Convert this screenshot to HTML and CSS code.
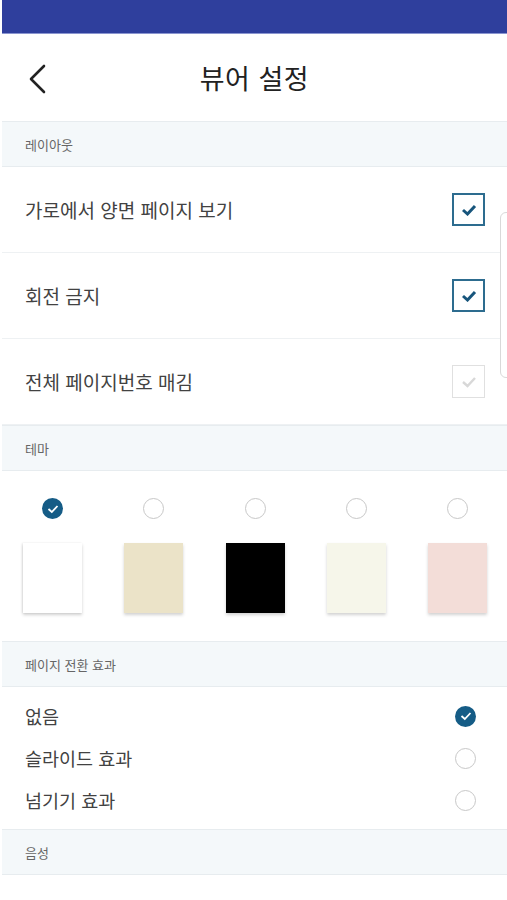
FILE: index.html
```html
<!DOCTYPE html>
<html lang="ko">
<head>
<meta charset="utf-8">
<title>뷰어 설정</title>
<link rel="stylesheet" href="styles.css">
</head>
<body>
<div class="screen">
  <div class="statusbar"></div>
  <header class="appbar">
    <button class="back" aria-label="뒤로">
      <svg width="20" height="30" viewBox="0 0 20 30"><path d="M17 2 L4 15 L17 28" fill="none" stroke="#222" stroke-width="2.6" stroke-linecap="round" stroke-linejoin="round"/></svg>
    </button>
    <h1 class="title">뷰어 설정</h1>
  </header>

  <div class="section">레이아웃</div>
  <div class="row">
    <span class="label">가로에서 양면 페이지 보기</span>
    <span class="checkbox on"><svg width="16" height="12" viewBox="0 0 16 12"><path d="M2 6 L6.5 10 L14 2" fill="none" stroke="#17557c" stroke-width="3"/></svg></span>
  </div>
  <div class="row">
    <span class="label">회전 금지</span>
    <span class="checkbox on"><svg width="16" height="12" viewBox="0 0 16 12"><path d="M2 6 L6.5 10 L14 2" fill="none" stroke="#17557c" stroke-width="3"/></svg></span>
  </div>
  <div class="row">
    <span class="label">전체 페이지번호 매김</span>
    <span class="checkbox off"><svg width="16" height="12" viewBox="0 0 16 12"><path d="M2 6 L6.5 10 L14 2" fill="none" stroke="#d8d8d8" stroke-width="2.4"/></svg></span>
  </div>

  <div class="section">테마</div>
  <div class="themes">
    <div class="theme">
      <span class="radio sel"><svg width="12" height="10" viewBox="0 0 12 10"><path d="M1.5 5 L4.8 8 L10.5 2" fill="none" stroke="#fff" stroke-width="1.8"/></svg></span>
      <span class="swatch white"></span>
    </div>
    <div class="theme"><span class="radio"></span><span class="swatch beige"></span></div>
    <div class="theme"><span class="radio"></span><span class="swatch black"></span></div>
    <div class="theme"><span class="radio"></span><span class="swatch ivory"></span></div>
    <div class="theme"><span class="radio"></span><span class="swatch pink"></span></div>
  </div>

  <div class="section">페이지 전환 효과</div>
  <div class="options">
    <div class="option">
      <span class="label">없음</span>
      <span class="radio sel"><svg width="12" height="10" viewBox="0 0 12 10"><path d="M1.5 5 L4.8 8 L10.5 2" fill="none" stroke="#fff" stroke-width="1.8"/></svg></span>
    </div>
    <div class="option">
      <span class="label">슬라이드 효과</span>
      <span class="radio"></span>
    </div>
    <div class="option">
      <span class="label">넘기기 효과</span>
      <span class="radio"></span>
    </div>
  </div>

  <div class="section">음성</div>

  <div class="scroll-indicator"></div>
</div>
</body>
</html>
```

FILE: styles.css
```css
* { box-sizing: border-box; }
html, body { margin: 0; padding: 0; background: #fff; }
body {
  font-family: "Noto Sans CJK KR", "Noto Sans", sans-serif;
  color: #3d3d3d;
}
.screen {
  position: relative;
  margin-left: 2px;
  width: 505px;
  height: 900px;
  overflow: hidden;
}
.statusbar {
  height: 34px;
  background: #2f3f9d;
  border-bottom: 1px solid #8a95d0;
}
.appbar {
  height: 87px;
  display: flex;
  align-items: center;
  position: relative;
}
.back {
  border: 0;
  background: none;
  padding: 0;
  margin-left: 25px;
  margin-top: 2px;
  display: flex;
  cursor: pointer;
}
.title {
  position: absolute;
  left: 0;
  right: 0;
  margin: 0;
  text-align: center;
  font-size: 27px;
  font-weight: 400;
  color: #222;
  letter-spacing: 0.5px;
  pointer-events: none;
}
.section {
  height: 46px;
  display: flex;
  align-items: center;
  padding-left: 23px;
  background: #f4f8fa;
  border-top: 1px solid #e7ecef;
  border-bottom: 1px solid #e7ecef;
  font-size: 13px;
  color: #666;
}
.row {
  height: 86px;
  display: flex;
  align-items: center;
  justify-content: space-between;
  padding: 0 22px 0 23px;
  border-bottom: 1px solid #eef1f3;
}
.row:last-of-type { border-bottom: 0; }
.label {
  font-size: 19px;
  color: #424242;
}
.checkbox {
  width: 33px;
  height: 33px;
  display: flex;
  align-items: center;
  justify-content: center;
}
.checkbox.on { border: 2px solid #2d6c8f; }
.checkbox.off { border: 1.5px solid #e0e0e0; }
.themes {
  display: flex;
  justify-content: space-between;
  padding: 27px 20px 28px 21px;
}
.theme {
  width: 59px;
  display: flex;
  flex-direction: column;
  align-items: center;
  gap: 24px;
}
.radio {
  width: 21px;
  height: 21px;
  border-radius: 50%;
  border: 1.5px solid #c8c8c8;
  background: #fff;
  display: flex;
  align-items: center;
  justify-content: center;
}
.radio.sel {
  border: 0;
  background: #155c86;
}
.swatch {
  width: 59px;
  height: 70px;
  box-shadow: 0 2px 3px rgba(0,0,0,0.18);
}
.swatch.white { background: #fff; box-shadow: 0 2px 3px rgba(0,0,0,0.18), -1px 0 2px rgba(0,0,0,0.08); }
.swatch.beige { background: #ebe3c8; }
.swatch.black { background: #000; }
.swatch.ivory { background: #f6f6ea; }
.swatch.pink { background: #f3ddd8; }
.options {
  padding: 8px 0;
  display: flex;
  flex-direction: column;
}
.option {
  height: 42px;
  display: flex;
  align-items: center;
  justify-content: space-between;
  padding: 0 31px 0 23px;
}
.option .label { font-size: 18.5px; }
.scroll-indicator {
  position: absolute;
  left: 498px;
  top: 212px;
  width: 14px;
  height: 166px;
  border: 1px solid #d9d9d9;
  border-radius: 6px;
  background: #fff;
}
```
